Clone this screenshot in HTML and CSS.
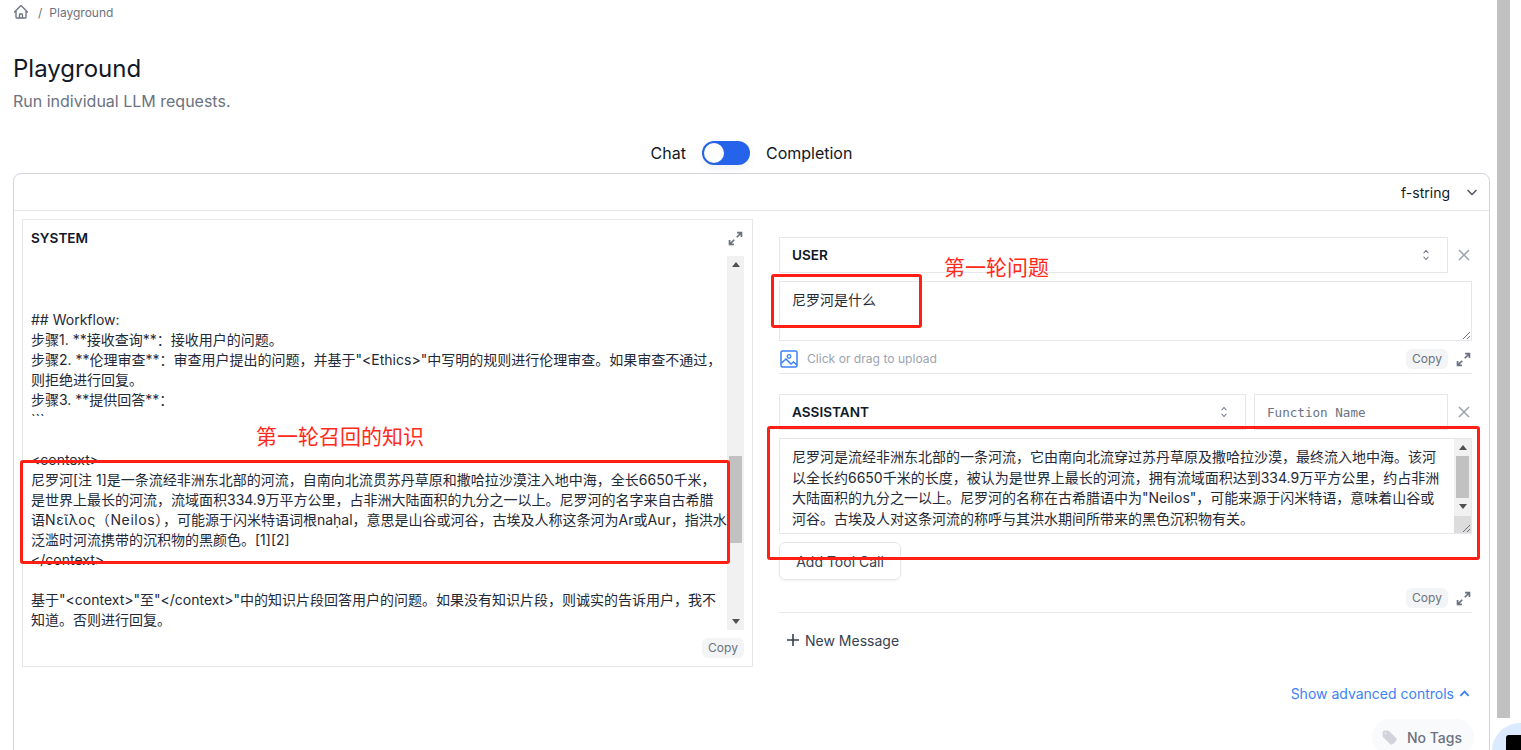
FILE: index.html
```html
<!DOCTYPE html>
<html lang="en">
<head>
    <meta charset="UTF-8">
    <title>Playground</title>
    <link rel="stylesheet" href="styles.css">
</head>
<body>
    <svg class="icon-defs" xmlns="http://www.w3.org/2000/svg">
        <symbol id="i-expand" viewBox="0 0 24 24">
            <path d="M14 10 21.5 2.5M14.5 2.5h7v7M10 14 2.5 21.5M2.5 14.5v7h7" fill="none" stroke="currentColor" stroke-width="2.8"/>
        </symbol>
        <symbol id="i-updown" viewBox="0 0 20 20">
            <path d="M6.5 7.5 10 3.5l3.5 4M6.5 12.5l3.5 4 3.5-4" fill="none" stroke="currentColor" stroke-width="1.5"/>
        </symbol>
        <symbol id="i-close" viewBox="0 0 12 12">
            <path d="M1 1l10 10M11 1 1 11" fill="none" stroke="currentColor" stroke-width="1.5"/>
        </symbol>
    </svg>

    <div class="page">
        <main class="main">
            <nav class="crumbs">
                <svg class="home" viewBox="0 0 24 24"><path d="m2.25 12 8.954-8.955c.44-.439 1.152-.439 1.591 0L21.75 12M4.5 9.75v10.125c0 .621.504 1.125 1.125 1.125H9.75v-4.875c0-.621.504-1.125 1.125-1.125h2.25c.621 0 1.125.504 1.125 1.125V21h4.125c.621 0 1.125-.504 1.125-1.125V9.75M8.25 21h8.25" fill="none" stroke="currentColor" stroke-width="2" stroke-linecap="round" stroke-linejoin="round"/></svg>
                <span class="crumb-sep">/</span>
                <span>Playground</span>
            </nav>

            <h1 class="title">Playground</h1>
            <p class="subtitle">Run individual LLM requests.</p>

            <div class="mode">
                <span>Chat</span>
                <div class="toggle"><div class="knob"></div></div>
                <span>Completion</span>
            </div>

            <section class="card">
                <div class="card-head">
                    <span>f-string</span>
                    <svg class="chev" viewBox="0 0 12 12"><path d="M1.5 4 6 8.5 10.5 4" fill="none" stroke="currentColor" stroke-width="1.5"/></svg>
                </div>

                <div class="card-body">
                    <div class="system">
                        <div class="system-head">
                            <span class="role">SYSTEM</span>
                            <svg class="expand"><use href="#i-expand"/></svg>
                        </div>
                        <div class="system-scroll">
                            <div class="system-text">## Workflow:
步骤1. **接收查询**：接收用户的问题。
步骤2. **伦理审查**：审查用户提出的问题，并基于"&lt;Ethics&gt;"中写明的规则进行伦理审查。如果审查不通过，
则拒绝进行回复。
步骤3. **提供回答**：
&#96;&#96;&#96;

&lt;context&gt;
尼罗河[注 1]是一条流经非洲东北部的河流，自南向北流贯苏丹草原和撒哈拉沙漠注入地中海，全长6650千米，
是世界上最长的河流，流域面积334.9万平方公里，占非洲大陆面积的九分之一以上。尼罗河的名字来自古希腊
语<span class="greek">Νεῖλος（Neilos）</span>，可能源于闪米特语词根naḥal，意思是山谷或河谷，古埃及人称这条河为Ar或Aur，指洪水
泛滥时河流携带的沉积物的黑颜色。[1][2]
&lt;/context&gt;

基于"&lt;context&gt;"至"&lt;/context&gt;"中的知识片段回答用户的问题。如果没有知识片段，则诚实的告诉用户，我不
知道。否则进行回复。</div>
                            <div class="track track-system">
                                <span class="arrow-up"></span>
                                <div class="thumb"></div>
                                <span class="arrow-down"></span>
                            </div>
                        </div>
                        <div class="system-foot"><span class="copy">Copy</span></div>
                    </div>

                    <div class="messages">
                        <div class="msg-head">
                            <div class="select select-user">
                                <span class="role">USER</span>
                                <svg class="updown"><use href="#i-updown"/></svg>
                            </div>
                            <svg class="close"><use href="#i-close"/></svg>
                        </div>
                        <div class="textbox textbox-user">
                            <div class="textbox-text">尼罗河是什么</div>
                            <svg class="grip" viewBox="0 0 10 10"><path d="M9 2 2 9M9 6 6 9" fill="none" stroke="#6b7280"/></svg>
                        </div>
                        <div class="tools tools-upload">
                            <svg class="upload" viewBox="0 0 18 18"><rect x="1" y="1" width="16" height="16" rx="1.5" fill="none" stroke="currentColor" stroke-width="1.5"/><circle cx="9" cy="6.5" r="1.8" fill="none" stroke="currentColor" stroke-width="1.3"/><path d="M1.5 13 6 9l5 5 2.5-2 3.5 3" fill="none" stroke="currentColor" stroke-width="1.5"/></svg>
                            <span class="upload-text">Click or drag to upload</span>
                            <span class="copy copy-push">Copy</span>
                            <svg class="expand"><use href="#i-expand"/></svg>
                        </div>

                        <div class="msg-head msg-assistant">
                            <div class="select select-assistant">
                                <span class="role">ASSISTANT</span>
                                <svg class="updown"><use href="#i-updown"/></svg>
                            </div>
                            <div class="fn-name">Function Name</div>
                            <svg class="close"><use href="#i-close"/></svg>
                        </div>
                        <div class="textbox textbox-assistant">
                            <div class="textbox-text">尼罗河是流经非洲东北部的一条河流，它由南向北流穿过苏丹草原及撒哈拉沙漠，最终流入地中海。该河
以全长约6650千米的长度，被认为是世界上最长的河流，拥有流域面积达到334.9万平方公里，约占非洲
大陆面积的九分之一以上。尼罗河的名称在古希腊语中为"Neilos"，可能来源于闪米特语，意味着山谷或
河谷。古埃及人对这条河流的称呼与其洪水期间所带来的黑色沉积物有关。</div>
                            <div class="track track-assistant">
                                <span class="arrow-up"></span>
                                <div class="thumb"></div>
                                <span class="arrow-down"></span>
                                <div class="corner"><svg viewBox="0 0 10 10"><path d="M9 2 2 9M9 6 6 9" fill="none" stroke="#6b7280"/></svg></div>
                            </div>
                        </div>
                        <button class="add-tool">Add Tool Call</button>
                        <div class="tools tools-assistant">
                            <span class="copy copy-push">Copy</span>
                            <svg class="expand"><use href="#i-expand"/></svg>
                        </div>
                        <div class="new-message">
                            <svg class="plus" viewBox="0 0 12 12"><path d="M6 0v12M0 6h12" fill="none" stroke="currentColor" stroke-width="1.6"/></svg>
                            <span>New Message</span>
                        </div>
                        <div class="advanced">
                            <span>Show advanced controls</span>
                            <svg class="adv-chev" viewBox="0 0 12 12"><path d="M1.5 8.5 6 4l4.5 4.5" fill="none" stroke="currentColor" stroke-width="2"/></svg>
                        </div>
                        <div class="tags">
                            <svg class="tag" viewBox="0 0 24 24"><path fill-rule="evenodd" d="M5.25 2.25a3 3 0 0 0-3 3v4.318a3 3 0 0 0 .879 2.121l9.58 9.581c.92.92 2.39 1.186 3.548.428a18.849 18.849 0 0 0 5.441-5.44c.758-1.16.492-2.629-.428-3.548l-9.58-9.581a3 3 0 0 0-2.122-.879H5.25ZM6.375 7.5a1.125 1.125 0 1 0 0-2.25 1.125 1.125 0 0 0 0 2.25Z" fill="currentColor"/></svg>
                            <span>No Tags</span>
                        </div>
                    </div>
                </div>
            </section>
        </main>

        <div class="page-scroll"><div class="page-thumb"></div></div>

        <!-- red notes drawn on top of the screenshot -->
        <div class="mark mark-context"></div>
        <div class="mark mark-user"></div>
        <div class="mark mark-assistant"></div>
        <div class="note note-context">第一轮召回的知识</div>
        <div class="note note-user">第一轮问题</div>

        <div class="bubble"><div class="bubble-inner"></div></div>
    </div>
</body>
</html>
```

FILE: styles.css
```css
html, body {
    margin: 0;
    height: 100%;
    overflow: hidden;
    background: #fff;
}

body {
    font-family: Inter, "Noto Sans CJK SC", sans-serif;
    color: #111827;
}

.icon-defs {
    display: none;
}

.page {
    position: relative;
    display: flex;
    width: 1521px;
    height: 750px;
    overflow: hidden;
}

.main {
    width: 1497px;
    flex: none;
}

/* breadcrumb and title */
.crumbs {
    display: flex;
    align-items: center;
    height: 24px;
    padding-left: 13px;
    font-size: 12px;
    color: #6b7280;
}

.home {
    width: 16px;
    height: 16px;
}

.crumb-sep {
    margin: 0 7px 0 9px;
}

.title {
    margin: 29px 0 0 13px;
    font-size: 24px;
    line-height: 32px;
    font-weight: 400;
}

.subtitle {
    margin: 4px 0 0 13px;
    font-size: 16px;
    line-height: 24px;
    color: #6b7280;
}

.mode {
    display: flex;
    justify-content: center;
    align-items: center;
    gap: 16px;
    height: 24px;
    margin-top: 28px;
    padding-left: 6px;
    font-size: 16px;
}

.toggle {
    display: flex;
    width: 48px;
    height: 24px;
    padding: 2px;
    box-sizing: border-box;
    border-radius: 12px;
    background: #2563eb;
    box-shadow: 0 4px 8px rgba(0,0,0,0.06);
}

.knob {
    width: 20px;
    height: 20px;
    border-radius: 50%;
    background: #fff;
}

/* card */
.card {
    width: 1477px;
    height: 700px;
    margin: 8px 0 0 13px;
    box-sizing: border-box;
    border: 1px solid #d1d5db;
    border-radius: 8px;
}

.card-head {
    display: flex;
    justify-content: flex-end;
    align-items: center;
    gap: 16px;
    height: 36px;
    padding-right: 11px;
    border-bottom: 1px solid #e5e7eb;
    font-size: 14px;
}

.chev {
    width: 12px;
    height: 12px;
    color: #4b5563;
}

.card-body {
    display: grid;
    grid-template-columns: 731px 693px;
    gap: 26px;
    padding-left: 8px;
}

.role {
    font-size: 13.6px;
    font-weight: 600;
}

.copy {
    width: 42px;
    height: 20px;
    border-radius: 6px;
    background: #f3f4f6;
    font-size: 12px;
    line-height: 20px;
    text-align: center;
    color: #6b7280;
}

.expand {
    width: 15px;
    height: 15px;
    color: #6b7280;
}

/* system prompt */
.system {
    height: 448px;
    margin-top: 8px;
    box-sizing: border-box;
    border: 1px solid #e5e7eb;
}

.system-head {
    display: flex;
    justify-content: space-between;
    align-items: center;
    height: 36px;
    padding: 0 9px 0 8px;
}

.system-scroll {
    display: flex;
    height: 374px;
    margin-left: 8px;
    margin-right: 8px;
}

.system-text {
    flex: 1;
    padding-top: 54px;
    overflow: hidden;
    white-space: pre;
    font-size: 14px;
    line-height: 20px;
    color: #1f2937;
}

.greek {
    letter-spacing: 0.6px;
}

.system-foot {
    display: flex;
    justify-content: flex-end;
    padding: 8px 8px 0 0;
}

/* native looking scrollbars */
.track {
    display: flex;
    flex-direction: column;
    align-items: center;
    flex: none;
    background: #f1f1f1;
}

.track-system {
    width: 17px;
}

.track-system .thumb {
    height: 87px;
    margin-top: 189px;
}

.thumb {
    width: 13px;
    background: #c1c1c1;
    flex: none;
}

.arrow-up, .arrow-down {
    width: 0;
    height: 0;
    flex: none;
    border-left: 4px solid transparent;
    border-right: 4px solid transparent;
}

.arrow-up {
    margin-top: 6px;
    border-bottom: 5px solid #505050;
}

.arrow-down {
    margin-top: auto;
    margin-bottom: 6px;
    border-top: 5px solid #505050;
}

/* message column */
.messages {
    display: flex;
    flex-direction: column;
    padding-top: 26px;
}

.msg-head {
    display: flex;
    align-items: center;
    gap: 8px;
}

.msg-assistant {
    margin-top: 20px;
}

.select, .fn-name {
    display: flex;
    align-items: center;
    height: 36px;
    box-sizing: border-box;
    border: 1px solid #e5e7eb;
}

.select {
    justify-content: space-between;
    padding: 0 14px 0 12px;
}

.select-user {
    width: 669px;
}

.select-assistant {
    width: 467px;
}

.fn-name {
    width: 194px;
    padding-left: 12px;
    font-family: "DejaVu Sans Mono", monospace;
    font-size: 12.6px;
    color: #6b7280;
}

.updown {
    width: 14px;
    height: 14px;
    color: #6b7280;
}

.close {
    width: 12px;
    height: 12px;
    margin-left: 2px;
    color: #9ca3af;
}

.textbox {
    position: relative;
    display: flex;
    width: 693px;
    margin-top: 8px;
    box-sizing: border-box;
    border: 1px solid #e5e7eb;
}

.textbox-user {
    height: 60px;
}

.textbox-assistant {
    height: 96px;
}

.textbox-text {
    flex: 1;
    padding: 8px 0 0 12px;
    overflow: hidden;
    white-space: pre;
    font-size: 14px;
    line-height: 20.5px;
    color: #1f2937;
}

.grip {
    position: absolute;
    right: 0;
    bottom: 0;
    width: 10px;
    height: 10px;
}

.track-assistant {
    width: 17px;
}

.track-assistant .thumb {
    height: 42px;
    margin-top: 6px;
}

.track-assistant .arrow-down {
    margin-top: 6px;
    margin-bottom: 0;
}

.corner {
    display: flex;
    justify-content: flex-end;
    align-items: flex-end;
    width: 100%;
    height: 17px;
    margin-top: auto;
    background: #dcdcdc;
}

.corner svg {
    width: 10px;
    height: 10px;
}

.tools {
    display: flex;
    align-items: center;
    padding-bottom: 4px;
    border-bottom: 1px solid #e5e7eb;
}

.tools-upload {
    padding-top: 8px;
}

.tools-assistant {
    margin-top: 8px;
}

.tools .expand {
    margin: 0 1px 0 8px;
}

.copy-push {
    margin-left: auto;
}

.upload {
    width: 18px;
    height: 18px;
    margin-left: 1px;
    color: #3b82f6;
}

.upload-text {
    margin: -1px 0 0 9px;
    font-size: 12.1px;
    color: #9ca3af;
}

.add-tool {
    width: 122px;
    height: 38px;
    margin-top: 8px;
    border: 1px solid #e5e7eb;
    border-radius: 6px;
    background: #fff;
    box-shadow: 0 1px 2px rgba(0,0,0,0.05);
    font-family: inherit;
    font-size: 14px;
    color: #374151;
}

.new-message {
    display: flex;
    align-items: center;
    gap: 6px;
    height: 20px;
    margin-top: 17px;
    padding-left: 8px;
    font-size: 14px;
    color: #374151;
}

.plus {
    width: 12px;
    height: 12px;
}

.advanced {
    display: flex;
    justify-content: flex-end;
    align-items: center;
    gap: 5px;
    height: 20px;
    margin-top: 33px;
    padding-right: 2px;
    font-size: 14px;
    color: #3b82f6;
}

.adv-chev {
    width: 11px;
    height: 11px;
}

.tags {
    display: flex;
    align-items: center;
    gap: 9px;
    align-self: flex-end;
    height: 36px;
    margin: 16px -2px 0 0;
    padding: 0 12px 0 9px;
    border-radius: 18px;
    background: #f9fafb;
    font-size: 14px;
    font-weight: 500;
    color: #6b7280;
}

.tag {
    width: 17px;
    height: 17px;
    color: #d1d5db;
}

/* page scrollbar */
.page-scroll {
    width: 13px;
    flex: none;
}

.page-thumb {
    height: 718px;
    background: #c1c1c1;
}

/* red notes */
.mark {
    position: absolute;
    box-sizing: border-box;
    border: 3px solid #ff1f14;
    border-radius: 3px;
}

.mark-context {
    left: 20px;
    top: 460px;
    width: 710px;
    height: 104px;
}

.mark-user {
    left: 771px;
    top: 274px;
    width: 151px;
    height: 54px;
}

.mark-assistant {
    left: 767px;
    top: 426px;
    width: 713px;
    height: 134px;
}

.note {
    position: absolute;
    font-size: 21px;
    line-height: 28px;
    color: #ff2a1a;
}

.note-context {
    left: 256px;
    top: 423px;
}

.note-user {
    left: 944px;
    top: 254px;
}

.bubble {
    position: absolute;
    left: 1492px;
    top: 723px;
    width: 56px;
    height: 56px;
    border-radius: 50%;
    background: #dbeafe;
}

.bubble-inner {
    width: 30px;
    height: 30px;
    margin: 12px 0 0 14px;
    border-radius: 3px;
    background: #000;
}
```
